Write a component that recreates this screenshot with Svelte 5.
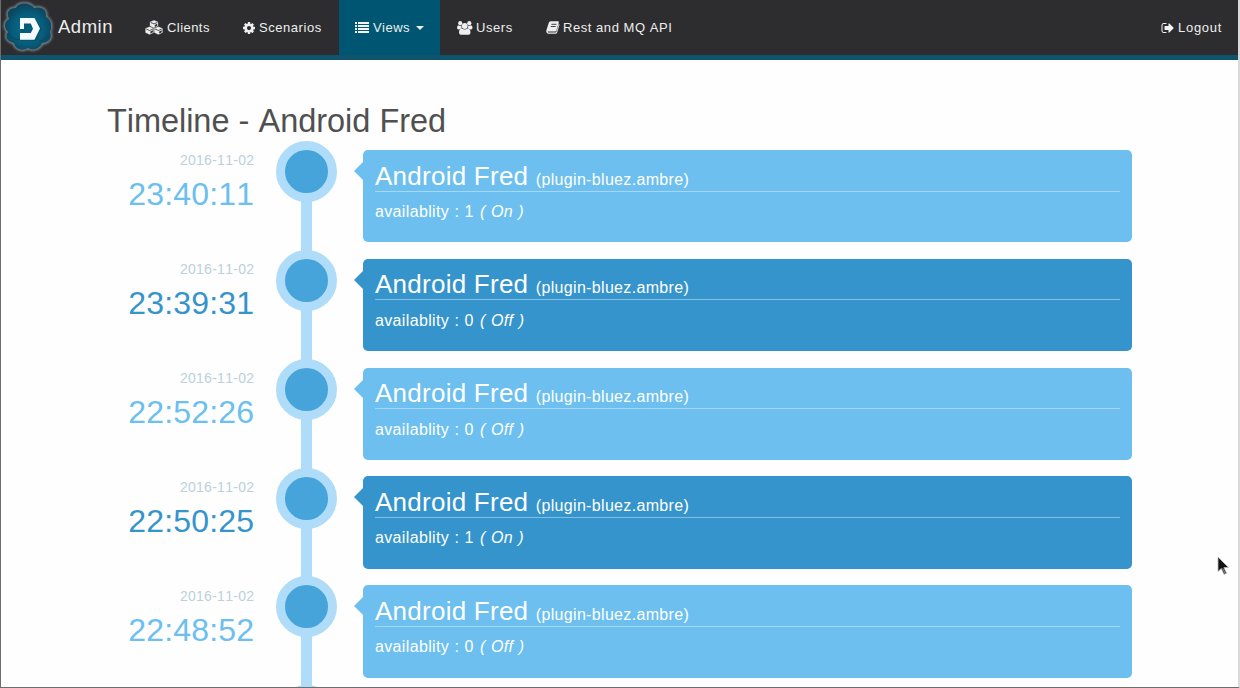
<script>
  const events = [
    { date: '2016-11-02', time: '23:40:11', value: '1', label: 'On' },
    { date: '2016-11-02', time: '23:39:31', value: '0', label: 'Off' },
    { date: '2016-11-02', time: '22:52:26', value: '0', label: 'Off' },
    { date: '2016-11-02', time: '22:50:25', value: '1', label: 'On' },
    { date: '2016-11-02', time: '22:48:52', value: '0', label: 'Off' }
  ];
</script>

<div class="window">
  <nav>
    <svg class="logo" viewBox="0 0 54 54">
      <defs>
        <radialGradient id="cloud" cx="50%" cy="55%" r="55%">
          <stop offset="0" stop-color="#08708f" />
          <stop offset="0.6" stop-color="#075d7c" />
          <stop offset="1" stop-color="#0b435b" />
        </radialGradient>
        <filter id="glow" x="-20%" y="-20%" width="140%" height="140%"><feGaussianBlur stdDeviation="1.2" /></filter>
      </defs>
      <path d="M15 8C17 2 29 2 33 8C41 6 46 10 45 17C51 20 51 28 49 32C52 39 46 43 41 43C39 49 31 51 27 48C20 52 14 48 13 43C5 41 4 36 7 32C2 27 4 21 8 19C5 12 8 8 15 8Z" fill="none" stroke="#76848c" stroke-width="3" filter="url(#glow)" />
      <path d="M15 8C17 2 29 2 33 8C41 6 46 10 45 17C51 20 51 28 49 32C52 39 46 43 41 43C39 49 31 51 27 48C20 52 14 48 13 43C5 41 4 36 7 32C2 27 4 21 8 19C5 12 8 8 15 8Z" fill="url(#cloud)" />
      <path d="M7 33c3 6 8 7 13 6M38 41c4 0 7-2 8-5M15 8c-3 2-4 5-3 8" fill="none" stroke="#0a4a63" stroke-width="1" />
      <path d="M20 19H34.500L40.500 29 35 41H20Z" fill="#043f57" opacity=".35" />
      <path d="M19 18H33.500L39 28.500 33.500 39.700H19V33H29.800L32 28.700 29.800 23.500H23V29H19Z" fill="#f5fafc" />
    </svg>
    <span class="brand">Admin</span>
    <a class="item clients" href="#clients">
      <svg width="18" height="15" viewBox="0 0 18 15">
        <g fill="#eee" stroke="#2d2d30" stroke-width=".4">
          <path d="M9 0 13.200 1.800V6.200L9 8.200 4.800 6.200V1.800Z" />
          <path d="M4.600 6.400 8.900 8.300V12.800L4.600 14.800.2 12.800V8.300Z" />
          <path d="M13.400 6.400 17.800 8.300V12.800L13.400 14.800 9.100 12.800V8.300Z" />
        </g>
        <g fill="none" stroke="#2d2d30" stroke-width=".8">
          <path d="M5.800 2.500 9 3.900 12.200 2.500M1.200 9 4.600 10.500 8 9M10 9 13.400 10.500 16.800 9" />
        </g>
        <path d="M9.800 4.900 12.200 3.800V5.700L9.800 6.900ZM5.400 11.400 7.900 10.300V12.200L5.400 13.400ZM14.200 11.400 16.700 10.300V12.200L14.200 13.400Z" fill="#2d2d30" />
      </svg>Clients
    </a>
    <a class="item scenarios" href="#scenarios">
      <svg width="14" height="14" viewBox="0 0 1792 1792"><path fill="#eee" d="M1152 896q0-106-75-181t-181-75-181 75-75 181 75 181 181 75 181-75 75-181zm512-109v222q0 12-8 23t-20 13l-185 28q-19 54-39 91 35 50 107 138 10 12 10 25t-9 23q-27 37-99 108t-94 71q-12 0-26-9l-138-108q-44 23-91 38-16 136-29 186-7 28-36 28h-222q-14 0-24.500-8.500t-11.500-21.500l-28-184q-49-16-90-37l-141 107q-10 9-25 9-14 0-25-11-126-114-165-168-7-10-7-23 0-12 8-23 15-21 51-66.500t54-70.500q-27-50-41-99l-183-27q-13-2-21-12.500t-8-23.500v-222q0-12 8-23t19-13l186-28q14-46 39-92-40-57-107-138-10-12-10-24 0-10 9-23 26-36 98.500-107.500t94.500-71.500q13 0 26 10l138 107q44-23 91-38 16-136 29-186 7-28 36-28h222q14 0 24.500 8.500t11.500 21.500l28 184q49 16 90 37l142-107q9-9 24-9 13 0 25 10 129 119 165 170 7 8 7 22 0 12-8 23-15 21-51 66.500t-54 70.500q26 50 41 98l183 28q13 2 21 12.500t8 23.500z" /></svg>Scenarios
    </a>
    <a class="item views" href="#views">
      <svg width="14" height="12" viewBox="0 0 14 12"><path fill="#f4f4f4" d="M0 0h2v2H0zM3 0h11v2H3zM0 3h2v2H0zM3 3h11v2H3zM0 6h2v2H0zM3 6h11v2H3zM0 9h2v2H0zM3 9h11v2H3z" /></svg>Views<i class="caret"></i>
    </a>
    <a class="item users" href="#users">
      <svg width="16" height="14" viewBox="0 0 16 14">
        <g fill="#eee">
          <circle cx="3.200" cy="2.200" r="2.100" /><circle cx="12.300" cy="2.200" r="2.100" />
          <path d="M1.500 4.200q1.700 1 3.200.2-.8 1.400.1 3.100-1.300 0-2.200 1H1.500Q0 8.400 0 6.800 0 4.400 1.500 4.200ZM14 4.200q-1.700 1-3.200.2.800 1.400-.1 3.100 1.300 0 2.200 1H14q1.500-.1 1.500-1.700 0-2.400-1.500-2.600Z" />
          <circle cx="7.750" cy="5" r="2.900" />
          <path d="M4.900 7.500q2.850 2.200 5.700 0 2.900.3 2.900 4 0 2.300-2 2.300H4q-2 0-2-2.300 0-3.700 2.900-4Z" />
        </g>
      </svg>Users
    </a>
    <a class="item api" href="#api">
      <svg width="14" height="13" viewBox="0 0 14 13">
        <path fill="#eee" d="M4.700.3h7.200q1.300 0 .9 1.300l-2.400 7.900q-.3 1-1.300 1H2.200q-.9 0-.6.600.1.400.8.400h7.100q.7 0 .9-.7l2.500-8.100q.8.500.5 1.400l-2.300 7.600q-.4 1-1.500 1H2.300Q.8 12.500.4 11q-.3-.8 0-1.700L2.700 2Q3.200.3 4.700.3Z" />
        <path d="M5.400 3.300h5M4.700 5.500h5" stroke="#2d2d30" stroke-width=".9" />
      </svg>Rest and MQ API
    </a>
    <a class="item logout" href="#logout">
      <svg width="14" height="14" viewBox="0 0 1792 1792"><path fill="#f4f4f4" d="M704 1440q0 4 1 20t.5 26.500-3 23.500-10 19.500-20.500 6.500h-320q-119 0-203.500-84.500t-84.500-203.500v-704q0-119 84.500-203.500t203.500-84.500h320q13 0 22.500 9.500t9.500 22.500q0 4 1 20t.5 26.500-3 23.500-10 19.500-20.500 6.500h-320q-66 0-113 47t-47 113v704q0 66 47 113t113 47h312l11.500 1 11.500 3 8 5.500 7 9 2 13.500zm928-544q0 26-19 45l-544 544q-19 19-45 19t-45-19-19-45v-288h-448q-26 0-45-19t-19-45v-384q0-26 19-45t45-19h448v-288q0-26 19-45t45-19 45 19l544 544q19 19 19 45z" /></svg>Logout
    </a>
  </nav>

  <main>
    <h1>Timeline - Android Fred</h1>
    <ul>
      {#each events as e, i}
        <li class:dark={i % 2 === 1}>
          <time><span class="date">{e.date}</span><span class="clock">{e.time}</span></time>
          <div class="track"><div class="dot"></div></div>
          <article>
            <h2>Android Fred <small>(plugin-bluez.ambre)</small></h2>
            <p>availablity : {e.value} <em>( {e.label} )</em></p>
          </article>
        </li>
      {/each}
      <li>
        <time></time>
        <div class="track"><div class="dot"></div></div>
      </li>
    </ul>
  </main>

  <svg class="pointer" width="13" height="20" viewBox="0 0 13 20">
    <path d="M1 1V15.500L4.300 12.500 7 18.300 9.500 17.200 6.900 11.500H11.500Z" fill="#111" stroke="#bbb" stroke-width=".8" />
    <path d="M5.700 12.300 8 17.200" stroke="#999" stroke-width="1" />
  </svg>
</div>

<style>
  :global(body) { background: #fff; overflow: hidden; }
  .window {
    position: relative;
    box-sizing: border-box;
    width: 1240px;
    height: 688px;
    overflow: hidden;
    border-left: 1px solid #6d6d6d;
    border-right: 2px solid #dadada;
    border-bottom: 1px solid #6d6d6d;
    background: #fefefe;
    font-family: "Liberation Sans", Arial, sans-serif;
    font-kerning: none;
  }
  nav {
    display: flex;
    box-sizing: border-box;
    height: 60px;
    background: #2d2d2f;
    border-bottom: 5px solid #0f536d;
    color: #eee;
    font-size: 13px;
  }
  .logo { width: 54px; height: 54px; flex: none; }
  .brand {
    box-sizing: border-box;
    width: 76px;
    padding-left: 3px;
    font-size: 18.5px;
    letter-spacing: 0.5px;
    line-height: 54px;
    flex: none;
  }
  .item {
    display: flex;
    align-items: center;
    box-sizing: border-box;
    height: 55px;
    color: #eee;
    text-decoration: none;
    letter-spacing: 0.45px;
    white-space: nowrap;
    flex: none;
  }
  .item svg { flex: none; margin-right: 3px; }
  .clients { width: 96px; padding-left: 14px; }
  .clients svg { margin-right: 4px; }
  .scenarios { width: 112px; padding-left: 15px; letter-spacing: 0.55px; }
  .views { width: 101px; padding-left: 16px; background: #005672; }
  .views svg { margin-right: 4px; }
  .caret {
    margin-left: 6px;
    border: 4px solid transparent;
    border-top-color: #eee;
    border-bottom: 0;
  }
  .users { width: 90px; padding-left: 17px; letter-spacing: 0.55px; }
  .api { padding-left: 16px; letter-spacing: 0.55px; }
  .logout { margin-left: auto; padding-right: 16px; letter-spacing: 0.7px; }
  main { padding: 39px 106px 0; }
  h1 {
    margin: 0;
    height: 51px;
    color: #505050;
    font-size: 32.5px;
    font-weight: 400;
    line-height: 44px;
    letter-spacing: -0.05px;
    word-spacing: 0.2px;
  }
  ul { list-style: none; margin: 0; padding: 0; }
  li { display: flex; height: 108.8px; }
  time {
    display: flex;
    flex-direction: column;
    box-sizing: border-box;
    width: 148px;
    padding: 0.4px 0.7px 0 0;
    text-align: right;
    white-space: nowrap;
    flex: none;
  }
  .date { color: #bdd0db; font-size: 14px; line-height: 20px; letter-spacing: 0.28px; }
  .clock { color: #6cbfee; font-size: 32px; line-height: 48px; letter-spacing: 0.2px; }
  .dark .clock { color: #3594cb; }
  .track {
    display: flex;
    justify-content: center;
    width: 61px;
    margin: 0 26px 0 21px;
    flex: none;
    background: linear-gradient(#afdcf8, #afdcf8) 25px 0 / 11px 100% no-repeat;
  }
  .dot {
    box-sizing: border-box;
    width: 61px;
    height: 61px;
    margin-top: -8.9px;
    border-radius: 50%;
    border: 9px solid #afdcf8;
    background: #46a4da;
    flex: none;
  }
  article {
    position: relative;
    box-sizing: border-box;
    height: 92.4px;
    width: 769px;
    padding: 9.65px 12px;
    border-radius: 5px;
    background: #6cbfee;
    color: #fff;
    flex: none;
  }
  article::before {
    content: "";
    position: absolute;
    left: -9px;
    top: 12px;
    border: 9px solid transparent;
    border-left: 0;
    border-right-color: #6cbfee;
  }
  .dark article { background: #3594cb; }
  .dark article::before { border-right-color: #3594cb; }
  h2 {
    box-sizing: border-box;
    height: 32px;
    margin: 0;
    border-bottom: 1px solid rgba(255, 255, 255, 0.4);
    font-size: 26px;
    font-weight: 400;
    line-height: 32px;
    letter-spacing: 0.25px;
  }
  small { font-size: 16px; letter-spacing: 0.33px; }
  p {
    margin: 10.35px 0 0;
    font-size: 16px;
    line-height: 20px;
    letter-spacing: 0.35px;
    word-spacing: 0.5px;
  }
  em { margin-left: 1px; }
  .pointer { position: absolute; left: 1216px; top: 556px; }
</style>
